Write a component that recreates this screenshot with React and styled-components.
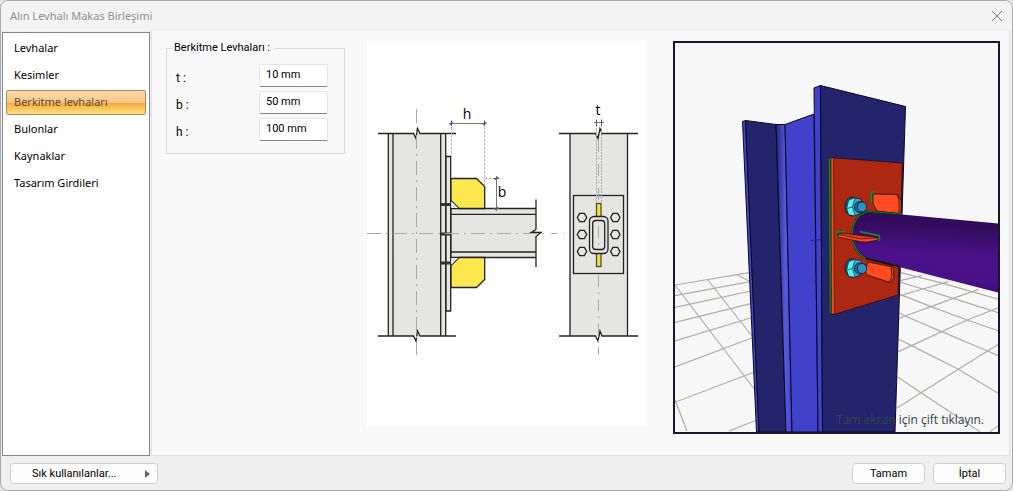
import React, { useState } from 'react';
import styled, { createGlobalStyle } from 'styled-components';

const GlobalStyle = createGlobalStyle`
  * {
    box-sizing: border-box;
  }
  body {
    margin: 0;
    background: #e4e4e4;
    font-family: Roboto, 'Open Sans', sans-serif;
    font-size: 11px;
    color: #000;
  }
  button, input {
    font-family: inherit;
    font-size: inherit;
    color: inherit;
  }
`;

const Window = styled.div`
  display: flex;
  flex-direction: column;
  min-height: 100vh;
  border: 1px solid #aaa;
  border-radius: 8px;
  background: #efefef;
  overflow: hidden;
`;

const TitleBar = styled.header`
  display: flex;
  align-items: center;
  justify-content: space-between;
  height: 30px;
  padding: 0 9px;
  background: #f3f3f3;
`;

const Title = styled.h1`
  margin: 0;
  font-family: 'Noto Sans', sans-serif;
  font-size: 11px;
  line-height: 14px;
  font-weight: 400;
  color: #8f8f8f;
`;

const CloseButton = styled.button`
  display: flex;
  padding: 0;
  border: none;
  background: none;
  color: #777;
`;

const Body = styled.main`
  flex: 1;
  display: flex;
  gap: 1px;
  padding: 0 2px 0 1px;
`;

const Sidebar = styled.nav`
  flex: 0 0 148px;
  display: flex;
  flex-direction: column;
  gap: 2px;
  margin-top: 1px;
  padding: 3px;
  border: 1px solid #828790;
  background: #fff;
`;

const NavItem = styled.button`
  height: 25px;
  padding: 0 7px 2px;
  border: 1px solid ${({ $active }) => ($active ? '#b58a4c' : 'transparent')};
  border-radius: 2px;
  text-align: left;
  font-family: 'Noto Sans', sans-serif;
  color: ${({ $active }) => ($active ? '#5c4a35' : '#000')};
  background: ${({ $active }) =>
    $active
      ? 'linear-gradient(#fbd9b3 0%, #f9c583 50%, #f7a947 54%, #fbc456 75%, #fde28a 100%)'
      : 'transparent'};
`;

const Content = styled.section`
  flex: 1;
  display: grid;
  grid-template-columns: 179px 280px 1fr;
  column-gap: 22px;
  align-items: start;
  padding: 10px 9px 20px 14px;
  border: 1px solid #e2e2e2;
  border-top: none;
  background: #f9f9f9;
`;

const Group = styled.fieldset`
  display: flex;
  flex-direction: column;
  gap: 4px;
  min-width: 0;
  margin: 0;
  padding: 9px 16px 12px 9px;
  border: 1px solid #dcdcdc;
`;

const Legend = styled.legend`
  margin-left: -4px;
  padding: 0 4px 0 2px;
  line-height: 14px;
`;

const Field = styled.div`
  display: flex;
  align-items: center;
  justify-content: space-between;
`;

const FieldLabel = styled.label`
  padding-top: 4px;
  font-size: 12px;
`;

const FieldInput = styled.input`
  width: 69px;
  height: 23px;
  padding: 0 6px 3px;
  border: 1px solid #e5e5e5;
  border-bottom-color: #868686;
  border-radius: 2px;
  background: #fff;
`;

const Drawing = styled.svg`
  display: block;
  width: 100%;
  background: #fff;
`;

const Viewer = styled.figure`
  position: relative;
  margin: 0 0 0 4px;
  border: 2px solid #17172f;
  background: #f7f7f7;
`;

const Scene = styled.svg`
  display: block;
  width: 100%;
`;

const Hint = styled.figcaption`
  position: absolute;
  right: 14px;
  bottom: 4px;
  font-family: 'Open Sans', sans-serif;
  font-size: 12px;
  color: #2f4444;
`;

const Footer = styled.footer`
  display: flex;
  gap: 8px;
  padding: 7px 6px 6px 9px;
`;

const Button = styled.button`
  width: ${({ $wide }) => ($wide ? '148px' : '73px')};
  height: 21px;
  display: flex;
  align-items: center;
  justify-content: ${({ $wide }) => ($wide ? 'space-between' : 'center')};
  margin-right: ${({ $wide }) => ($wide ? 'auto' : '0')};
  padding: ${({ $wide }) => ($wide ? '0 7px 0 21px' : '0')};
  border: 1px solid #d0d0d0;
  border-radius: 4px;
  background: #fdfdfd;
`;

const sections = ['Levhalar', 'Kesimler', 'Berkitme levhaları', 'Bulonlar', 'Kaynaklar', 'Tasarım Girdileri'];

const hexagon = (cx, cy, r) =>
  [0, 1, 2, 3, 4, 5]
    .map((i) => `${cx + r * Math.cos((i * Math.PI) / 3)},${cy + r * Math.sin((i * Math.PI) / 3)}`)
    .join(' ');

const ConnectionDrawing = () => (
  <Drawing viewBox="367 41 280 385" role="img" aria-label="h, b, t">
    {/* side view */}
    <g fill="#e5e5e3" stroke="#222" strokeWidth="1.3">
      <path d="M388 133.5H446V336H388Z" stroke="none" />
      <path d="M388.3 133.5V336M393 133.5V336M440.7 133.5V336M445.7 133.5V336" />
      <path d="M446 156.5H450.7V311H446Z" />
      <path d="M451 208.5H536V257.5H451Z" stroke="none" />
      <path d="M536 208.5H451V257.5H536M451 214.3H536M451 252H536" />
      <path d="M378 133.5H413.5L416 138.5L417.5 128.5L420 133.5H456M378 336H413.5L416 341L417.5 331L420 336H456" fill="none" />
      <path d="M536 199.5V229.5L531 232.5H541L536 236.5V267" fill="none" />
      <path d="M441 204.5H451M441 234H451M441 263H451" stroke="#333" strokeWidth="3" />
    </g>
    <g fill="#fde74f" stroke="#222" strokeWidth="1.3">
      <path d="M451 178.5H476.5L484.7 186.5V208.5H459L451 200.5Z" />
      <path d="M451 287.5H476.5L484.7 279.5V257.5H459L451 265.5Z" />
      <path d="M451.5 201.5L458 208H451.5ZM451.5 264.5L458 258H451.5Z" fill="#fff" stroke="none" />
    </g>

    {/* front view */}
    <g fill="#e5e5e3" stroke="#222" strokeWidth="1.3">
      <path d="M570 133.5H627.5V336H570Z" stroke="none" />
      <path d="M570 133.5V336M627.5 133.5V336" />
      <path d="M559 133.5H595.5L598 138.5L600 128.5L602 133.5H638M559 336H595.5L598 341L600 331L602 336H638" fill="none" />
      <rect x="573.5" y="195.5" width="50" height="78" />
      <rect x="596.5" y="203.5" width="4.5" height="63" fill="#f3df48" stroke="#554f25" />
      <rect x="589.5" y="216.5" width="18.5" height="37" rx="4.5" />
      <rect x="592.7" y="220.5" width="12" height="29" rx="3" />
      {[217.5, 234.5, 251.5].map((y) => (
        <React.Fragment key={y}>
          <polygon points={hexagon(582, y, 4.7)} />
          <polygon points={hexagon(615.3, y, 4.7)} />
        </React.Fragment>
      ))}
    </g>

    <g fill="none" stroke="#aaa" strokeWidth="1">
      <path d="M416.5 109V355M367 233.5H545M551 233.5H557M564 233.5H565" strokeDasharray="14 5 2 5" />
      <path d="M598.5 140V202M598.5 226V248M598.5 275V355" strokeDasharray="12 5 2 5" />
      <path d="M451.5 127V178M484.5 127V186M485 178.5H497" strokeDasharray="3 1" stroke="#bbb" />
      <path d="M596.5 125V203M601.5 125V203" strokeDasharray="2 1" />
      <path d="M449 123.5H487M496.5 176V211M594 122.5H604" stroke="#777" />
      <path d="M451.5 120.5V126M484.5 120.5V126M450 125L453 121.5M483 125L486 121.5M493.5 178.5H499M493.5 208.5H499M495 180L498 177M495 210L498 207M596.5 119.5V126M601.5 119.5V126" stroke="#555" />
    </g>
    <g fill="#000" fontFamily="'Open Sans', sans-serif" fontSize="14" textAnchor="middle">
      <text x="467" y="119">h</text>
      <text x="502" y="197">b</text>
      <text x="598" y="115">t</text>
    </g>
  </Drawing>
);

const Bolt = ({ x, y }) => (
  <g transform={`translate(${x} ${y})`} stroke="#0b1a26" strokeWidth="0.8">
    <ellipse cx="-3" cy="0" rx="7" ry="9.5" fill="#175a70" />
    <path d="M-8 2L-6 -6L0 -8.5L6 -7.5L9 1L6 7L0 9L-6 8Z" fill="#3fa9cf" />
    <path d="M-8 2L-6 -6L0 -8.5L-2.5 0L0 9L-6 8Z" fill="#52f2fb" stroke="none" />
    <path d="M-8 2L-2.5 0.500L0 -8.5M-2.5 0.500L0 9" fill="none" strokeWidth="0.600" />
    <ellipse cx="4.5" cy="0.5" rx="5" ry="5.7" fill="#1d6d96" />
    <ellipse cx="7" cy="0.5" rx="4.7" ry="5" fill="#2b92c8" />
  </g>
);

const ModelScene = () => (
  <Scene viewBox="675 43 323 389" aria-hidden="true">
    <defs>
      <linearGradient id="tube" x1="0" y1="0" x2="-0.12" y2="1">
        <stop offset="0.1" stopColor="#320c5c" />
        <stop offset="0.45" stopColor="#4b118b" />
        <stop offset="0.75" stopColor="#491087" />
        <stop offset="1" stopColor="#320b5a" />
      </linearGradient>
      <linearGradient id="fillet">
        <stop offset="0" stopColor="#242477" />
        <stop offset="0.6" stopColor="#5959df" />
        <stop offset="1" stopColor="#4141cb" />
      </linearGradient>
    </defs>

    {/* ground grid */}
    <path
      d="M675 85L749 72.7M675 95.7L750 81.7M675 107.3L751 91M675 122.3L752 103.3M675 141L753 117.3M675 167L755 136.7M675 202.3L755 171.7M729 231L757 220
      M675 85L755 190M707.5 79.5L752 136M736.5 74.5L749 81M675 200L687 231"
      transform="translate(0 200)"
      stroke="#adada9"
      strokeWidth="1.2"
      fill="none"
    />
    <path
      d="M20 445L93 398L205 328L293 273L325 253M25 275L65 257L155 215L232 180L325 143M28 175L45 168L123 140L190 115L265 88M30 107L98 87L175 65M30 62L95 47M300 515L325 497
      M22 350L93 398L270 515M25 237L65 257L205 328L325 400M28 158L45 168L155 215L293 273L325 287M30 103L123 140L232 180L325 212M32 67L98 87L190 115L325 158M32 38L160 70L245 95L325 118"
      transform="translate(890 260) scale(0.3333)"
      stroke="#adada9"
      strokeWidth="3.6"
      fill="none"
    />

    {/* column */}
    <g stroke="#0a0a20" strokeWidth="1">
      <path d="M742.5 121.5L745.5 120.5L759 432H756.5Z" fill="#4545cf" />
      <path d="M745.5 120.5L776 124.5L786 432H759Z" fill="#24246d" />
      <path d="M776 124.5H785L792 432H786Z" fill="url(#fillet)" />
      <path d="M785 124.5L814 114L818 432H792Z" fill="#4141cb" />
      <path d="M814 88L820.5 85.5L822.5 432H818Z" fill="#4141cb" />
      <path d="M820.5 85.5L905.5 106.5L895 432H822.5Z" fill="#24246d" />
      <path d="M811 240.5L821 239.5" stroke="#1a1aff" />
    </g>

    {/* end plate */}
    <g stroke="#1b1010" strokeWidth="0.8">
      <path d="M830.5 157.5L902.5 163L898 295L834 314.5H831Z" fill="#ad2812" />
      <path d="M828.3 158L830.8 157.3L831.3 314H829.3Z" fill="#0f8a2c" strokeWidth="0.5" />
      <path d="M831 158H833.5L834.3 314H831.5Z" fill="#f4481f" strokeWidth="0.5" />
      <path d="M871.5 203V192.5H875" stroke="#0f8a2c" strokeWidth="2" fill="none" />
      <path d="M873 194L897 194.5L901 200V214L877 211L873 204Z" fill="#ff4b1f" />
      <path d="M897 194.5L899 200V214" fill="none" />
      <path d="M868 262L893 267L894 278L890 282.5L867 275L865 271Z" fill="#ff4b1f" />
      <path d="M891 267L892 277L889 282" fill="none" />
    </g>
    <Bolt x="855" y="206.5" />
    <Bolt x="855" y="268" />

    {/* tube and middle stiffener */}
    <path d="M868 211.5C856 214 850 228 853 241C855 250 859 255 866 258.5L998 292.5V223.5L902 214.5Z" fill="url(#tube)" />
    <path d="M902 214L868 211.5C856 214 850 228 853 241C855 250 859 255 866 258.5L899 266.5" fill="none" stroke="#101810" strokeWidth="2" />
    <path d="M902 214L868 211.5C856 214 850 228 853 241C855 250 859 255 866 258.5" fill="none" stroke="#0f8a2c" strokeWidth="1.2" />
    <path d="M836.7 238V232.3L845 231.7M860 231.7L879.3 235.7V241" fill="none" stroke="#0f8a2c" strokeWidth="1.8" />
    <path d="M838 233.3H845L878 237.5V240L866.5 242L860 241.5L838 236.5Z" fill="#df3516" stroke="#1b1010" strokeWidth="0.8" />
    <path d="M838 234.5L861 239L878 238V240L866.5 242L860 241.5L838 237Z" fill="#ff4b1f" stroke="#1b1010" strokeWidth="0.6" />
  </Scene>
);

const App = () => {
  const [active, setActive] = useState(2);
  const [values, setValues] = useState({ t: '10 mm', b: '50 mm', h: '100 mm' });

  return (
    <>
      <GlobalStyle />
      <Window>
        <TitleBar>
          <Title>Alın Levhalı Makas Birleşimi</Title>
          <CloseButton aria-label="Kapat">
            <svg width="12" height="12" viewBox="0 0 12 12" stroke="currentColor">
              <path d="M1 1L11 11M11 1L1 11" />
            </svg>
          </CloseButton>
        </TitleBar>
        <Body>
          <Sidebar>
            {sections.map((name, i) => (
              <NavItem key={name} $active={i === active} onClick={() => setActive(i)}>
                {name}
              </NavItem>
            ))}
          </Sidebar>
          <Content>
            <Group>
              <Legend>Berkitme Levhaları :</Legend>
              {Object.keys(values).map((key) => (
                <Field key={key}>
                  <FieldLabel htmlFor={key}>{key} :</FieldLabel>
                  <FieldInput
                    id={key}
                    value={values[key]}
                    onChange={(e) => setValues({ ...values, [key]: e.target.value })}
                  />
                </Field>
              ))}
            </Group>
            <ConnectionDrawing />
            <Viewer>
              <ModelScene />
              <Hint>Tam ekran için çift tıklayın.</Hint>
            </Viewer>
          </Content>
        </Body>
        <Footer>
          <Button $wide>
            Sık kullanılanlar...
            <svg width="5" height="8" viewBox="0 0 5 8" fill="#666">
              <path d="M0 0L5 4L0 8Z" />
            </svg>
          </Button>
          <Button>Tamam</Button>
          <Button>İptal</Button>
        </Footer>
      </Window>
    </>
  );
};

export default App;
